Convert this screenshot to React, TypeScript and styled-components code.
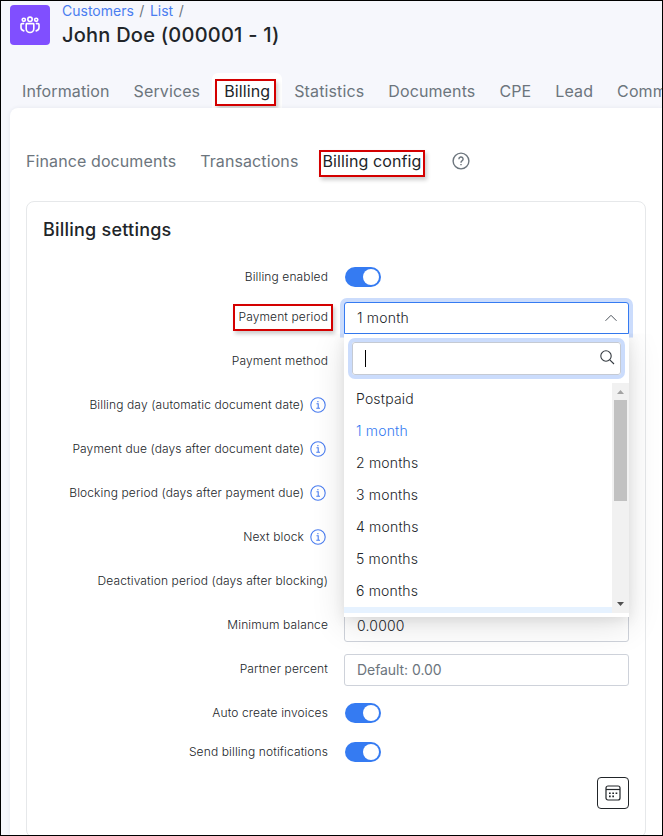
import React from "react";
import styled, { createGlobalStyle } from "styled-components";

const Global = createGlobalStyle`
  *, *::before, *::after { box-sizing: border-box; }
  body { margin: 0; font-family: Inter, "Liberation Sans", sans-serif; color: #212529; }
  svg { display: block; flex: none; }
`;

const Frame = styled.div`
  width: 663px;
  height: 836px;
  border: 1px solid #000;
  background: #f6f7fc;
  overflow: hidden;
  display: flex;
  flex-direction: column;
`;

const Header = styled.header`
  display: flex;
  gap: 12px;
  padding: 4px 0 0 9px;
  height: 72px;
  flex: none;
`;

const Badge = styled.div`
  width: 40px;
  height: 40px;
  border-radius: 4px;
  background: #804fff;
  display: flex;
  align-items: center;
  justify-content: center;
`;

const Heading = styled.div`
  margin-top: -4px;
`;

const Crumbs = styled.nav`
  display: flex;
  gap: 5.5px;
  font-size: 14px;
  line-height: 20px;
  letter-spacing: 0;
  color: #6c757d;
`;

const Crumb = styled.a`
  color: #4a7df0;
`;

const Title = styled.h1`
  margin: 1px 0 0;
  font-size: 20px;
  line-height: 27px;
  font-weight: 500;
  letter-spacing: 0.24px;
  white-space: nowrap;
`;

const Tabs = styled.nav`
  display: flex;
  height: 35px;
  padding-left: 9px;
  flex: none;
`;

const Tab = styled.a<{ $active?: boolean }>`
  flex: none;
  padding: 0 12px;
  line-height: 36px;
  font-size: 16px;
  letter-spacing: 0.12px;
  white-space: nowrap;
  border-radius: 6px 6px 0 0;
  color: ${(p) => (p.$active ? "#212529" : "#6c757d")};
  background: ${(p) => (p.$active ? "#fff" : "transparent")};
`;

const Marked = styled.span<{ $inset: string; $pull: string }>`
  display: inline-block;
  line-height: 18px;
  border: 2px solid #d40000;
  padding: ${(p) => p.$inset};
  margin: ${(p) => p.$pull};
  box-shadow: 2px 3px 4px rgba(0, 0, 0, 0.2);
`;

const Content = styled.main`
  flex: 1;
  margin-left: 9px;
  padding: 42px 15px 0 16px;
  background: #fff;
  border-top-left-radius: 8px;
  box-shadow: 0 0 4px rgba(40, 50, 90, 0.08);
`;

const SubTabs = styled.nav`
  display: flex;
  height: 51px;
  gap: 24px;
  line-height: 22px;
  font-size: 16px;
  letter-spacing: 0.1px;
  color: #6c757d;
  white-space: nowrap;
`;

const SubTab = styled.a<{ $active?: boolean }>`
  flex: none;
  color: ${(p) => (p.$active ? "#212529" : "#6c757d")};
`;

const HelpIcon = styled.svg`
  margin: 2px 0 0 7px;
`;

const Card = styled.section`
  width: 620px;
  height: 637px;
  border: 1px solid #e6e8ea;
  border-radius: 8px;
  padding: 16px;
`;

const CardTitle = styled.h2`
  margin: 0;
  font-size: 18px;
  line-height: 24px;
  font-weight: 500;
  letter-spacing: 0.22px;
  height: 39px;
`;

const Row = styled.div<{ $height?: number }>`
  display: grid;
  grid-template-columns: 285px 285px;
  column-gap: 16px;
  align-items: center;
  height: ${(p) => p.$height ?? 44}px;
`;

const FirstRow = styled(Row)`
  padding-top: 2px;
`;

const Label = styled.label`
  display: flex;
  align-items: center;
  justify-content: flex-end;
  gap: 6px;
  font-size: 12px;
  line-height: 20px;
  font-weight: 300;
  letter-spacing: 0.12px;
  color: #212529;
  white-space: nowrap;
`;

const Control = styled.div`
  position: relative;
  padding-top: 1px;
`;

const Field = styled.div<{ $muted?: boolean }>`
  height: 32px;
  border: 1px solid #ced2da;
  border-radius: 3px;
  background: #fff;
  padding: 0 12px;
  font-size: 14px;
  font-weight: ${(p) => (p.$muted ? 400 : 300)};
  line-height: 30px;
  letter-spacing: ${(p) => (p.$muted ? "-0.06px" : "0.2px")};
  color: ${(p) => (p.$muted ? "#6c757d" : "#212529")};
`;

const Select = styled(Field)`
  display: flex;
  align-items: center;
  justify-content: space-between;
  padding-right: 10px;
  border-color: #357bf2;
  border-radius: 3px 3px 0 0;
  box-shadow: 0 0 0 4px #cbdcfc;
  clip-path: inset(-4px -4px -4px -4px round 4px 4px 0 0);
`;

const Menu = styled.div`
  position: absolute;
  top: 33px;
  left: 0;
  z-index: 2;
  width: 285px;
  height: 283px;
  padding-top: 8px;
  background: #fff;
  box-shadow: 0 8px 32px rgba(0, 0, 0, 0.12), 0 3px 12px rgba(0, 0, 0, 0.08);
  clip-path: inset(0 -50px -50px -50px);
`;

const Search = styled.div`
  display: flex;
  align-items: center;
  justify-content: space-between;
  width: 269px;
  height: 33px;
  margin: 0 8px;
  padding: 0 5px 0 12px;
  border: 1px solid #c5cad3;
  border-radius: 3px;
  box-shadow: 0 0 0 4px #cbdcfc;
`;

const SearchIcon = styled.svg`
  margin-top: -2px;
`;

const Caret = styled.span`
  width: 1px;
  height: 17px;
  background: #000;
`;

const ListBox = styled.div`
  display: flex;
  height: 230px;
  margin-top: 8px;
`;

const Options = styled.div`
  flex: 1;
  overflow: hidden;
`;

const Option = styled.div<{ $selected?: boolean; $hover?: boolean }>`
  height: 32px;
  padding-left: 12px;
  font-size: 14px;
  font-weight: 300;
  line-height: 32px;
  letter-spacing: 0.18px;
  color: ${(p) => (p.$selected ? "#357bf2" : "#212529")};
  background: ${(p) => (p.$hover ? "#e6f2ff" : "transparent")};
`;

const ScrollTrack = styled.div`
  width: 17px;
  background: #f1f1f1;
  display: flex;
  flex-direction: column;
  align-items: center;
  justify-content: space-between;
`;

const ScrollTop = styled.div`
  display: flex;
  flex-direction: column;
  align-items: center;
`;

const Thumb = styled.div`
  width: 13px;
  height: 101px;
  background: #c1c1c1;
`;

const Toggle = styled.div`
  width: 36px;
  height: 20px;
  margin-left: 1px;
  padding: 2px;
  border-radius: 10px;
  background: #357bf2;
  display: flex;
  justify-content: flex-end;
`;

const Knob = styled.span`
  width: 16px;
  height: 16px;
  border-radius: 50%;
  background: #fff;
`;

const Actions = styled.div`
  display: flex;
  justify-content: flex-end;
  padding-top: 8px;
`;

const IconButton = styled.button`
  width: 32px;
  height: 32px;
  padding: 0;
  border: 1px solid #212529;
  border-radius: 4px;
  background: #fff;
  color: #212529;
  display: flex;
  align-items: center;
  justify-content: center;
`;

const PeopleIcon = () => (
  <svg width="20" height="18" viewBox="0 0 20 18" fill="none" stroke="#fff" strokeWidth="1.6" strokeLinecap="round">
    <circle cx="10" cy="3.3" r="2.2" />
    <circle cx="3.8" cy="3.8" r="1.6" />
    <circle cx="16.2" cy="3.8" r="1.6" />
    <path d="M6.2 8.2Q6.2 7.6 6.9 7.6H13.1Q13.8 7.6 13.8 8.2V12.7A3.8 3.8 0 0 1 6.2 12.7Z" />
    <path d="M3.6 7.6H2Q1 7.6 1 8.6V11.6Q1 14.2 3.8 14.9M16.4 7.6H18Q19 7.6 19 8.6V11.6Q19 14.2 16.2 14.9" />
  </svg>
);

const InfoIcon = () => (
  <svg width="16" height="16" viewBox="0 0 16 16" fill="none" stroke="#4a7df0" strokeWidth="1.1">
    <circle cx="8" cy="8" r="7.2" />
    <path d="M6.5 6.8H8.2V11.2M6.3 11.3H10M7.9 4V5.3" />
  </svg>
);

const QuestionIcon = () => (
  <HelpIcon width="18" height="18" viewBox="0 0 18 18" fill="none" stroke="#6c757d" strokeWidth="1.4">
    <circle cx="9" cy="9" r="7.9" />
    <path d="M6.9 7.2A2.1 2.1 0 1 1 10 8.9Q9 9.5 9 10.7M9 12V13.3" />
  </HelpIcon>
);

const Switch = () => (
  <Toggle>
    <Knob />
  </Toggle>
);

const options = ["Postpaid", "1 month", "2 months", "3 months", "4 months", "5 months", "6 months"];

const PeriodSelect = () => (
  <Control>
    <Select>
      1 month
      <svg width="14" height="8" viewBox="0 0 14 8" fill="none" stroke="#4c535b" strokeWidth="1">
        <path d="M1.5 6.8L7 1.3L12.5 6.8" />
      </svg>
    </Select>
    <Menu>
      <Search>
        <Caret />
        <SearchIcon width="16" height="16" viewBox="0 0 16 16" fill="none" stroke="#343a40" strokeWidth="1.1">
          <circle cx="7" cy="7" r="5.2" />
          <path d="M10.8 10.8L15 15" />
        </SearchIcon>
      </Search>
      <ListBox>
        <Options>
          {options.map((o) => (
            <Option key={o} $selected={o === "1 month"}>
              {o}
            </Option>
          ))}
          <Option $hover />
        </Options>
        <ScrollTrack>
          <ScrollTop>
            <svg width="17" height="17" viewBox="0 0 17 17">
              <path d="M5 11L8.5 7L12 11Z" fill="#a3a3a3" />
            </svg>
            <Thumb />
          </ScrollTop>
          <svg width="17" height="17" viewBox="0 0 17 17">
            <path d="M5 6L8.5 10L12 6Z" fill="#505050" />
          </svg>
        </ScrollTrack>
      </ListBox>
    </Menu>
  </Control>
);

const coveredRows = [
  { text: "Payment method" },
  { text: "Billing day (automatic document date)", info: true },
  { text: "Payment due (days after document date)", info: true },
  { text: "Blocking period (days after payment due)", info: true },
  { text: "Next block", info: true },
  { text: "Deactivation period (days after blocking)" },
];

const InfoLabel = styled(Label)`
  padding-right: 2px;
`;

export default function App() {
  return (
    <Frame>
      <Global />
      <Header>
        <Badge>
          <PeopleIcon />
        </Badge>
        <Heading>
          <Crumbs>
            <Crumb>Customers</Crumb>/<Crumb>List</Crumb>/
          </Crumbs>
          <Title>John Doe (000001 - 1)</Title>
        </Heading>
      </Header>
      <Tabs>
        <Tab>Information</Tab>
        <Tab>Services</Tab>
        <Tab $active>
          <Marked $inset="1px 4px 4px 7px" $pull="0 -6px 0 -9px">Billing</Marked>
        </Tab>
        <Tab>Statistics</Tab>
        <Tab>Documents</Tab>
        <Tab>CPE</Tab>
        <Tab>Lead</Tab>
        <Tab>Comm</Tab>
      </Tabs>
      <Content>
        <SubTabs>
          <SubTab>Finance documents</SubTab>
          <SubTab>Transactions</SubTab>
          <SubTab $active>
            <Marked $inset="0 2px 5px 1px" $pull="0 -4px 0 -3px">Billing config</Marked>
          </SubTab>
          <QuestionIcon />
        </SubTabs>
        <Card>
          <CardTitle>Billing settings</CardTitle>
          <FirstRow $height={38}>
            <Label>Billing enabled</Label>
            <Switch />
          </FirstRow>
          <Row>
            <Label>
              <Marked $inset="2px 3px 3px 4px" $pull="0 -5px 0 0">Payment period</Marked>
            </Label>
            <PeriodSelect />
          </Row>
          {coveredRows.map((r) =>
            r.info ? (
              <Row key={r.text}>
                <InfoLabel>
                  {r.text}
                  <InfoIcon />
                </InfoLabel>
                <Field />
              </Row>
            ) : (
              <Row key={r.text}>
                <Label>{r.text}</Label>
                <Field />
              </Row>
            )
          )}
          <Row>
            <Label>Minimum balance</Label>
            <Control>
              <Field>0.0000</Field>
            </Control>
          </Row>
          <Row>
            <Label>Partner percent</Label>
            <Control>
              <Field $muted>Default: 0.00</Field>
            </Control>
          </Row>
          <Row>
            <Label>Auto create invoices</Label>
            <Switch />
          </Row>
          <Row $height={34}>
            <Label>Send billing notifications</Label>
            <Switch />
          </Row>
          <Actions>
            <IconButton aria-label="Calendar">
              <svg width="16" height="16" viewBox="0 0 16 16" fill="none" stroke="currentColor" strokeWidth="1.2">
                <rect x="1" y="1" width="14" height="14" rx="2" />
                <path d="M1 4.5H15" />
                <path d="M4 8.2H12.5M4 11.4H9.5" strokeWidth="1.6" strokeDasharray="1.7 1.6" />
              </svg>
            </IconButton>
          </Actions>
        </Card>
      </Content>
    </Frame>
  );
}
